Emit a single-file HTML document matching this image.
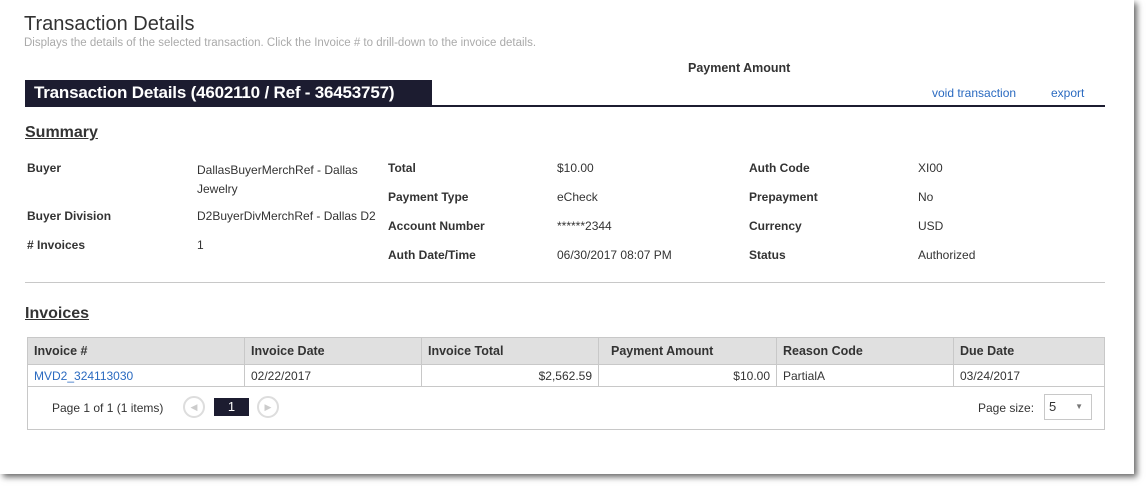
<!DOCTYPE html>
<html><head><style>
*{margin:0;padding:0;box-sizing:border-box}
body{width:1148px;height:489px;background:#fff;font-family:"Liberation Sans",sans-serif;position:relative;overflow:hidden;color:#333}
.panel{position:absolute;left:0;top:0;width:1134px;height:474px;background:#fff;box-shadow:3px 3px 6px rgba(0,0,0,.6)}
.a{position:absolute;white-space:nowrap}
.l{font-weight:bold;font-size:12px;color:#333}
.v{font-size:12px;color:#333}
.h{font-weight:bold;font-size:16px;text-decoration:underline;color:#333}
table{position:absolute;left:27px;top:337px;width:1078px;border-collapse:collapse;font-size:12px}
th{background:#e0e0e0;text-align:left;font-weight:bold;height:27px;border:1px solid #c8c8c8;padding:0 6px;color:#333;font-size:12.5px}
td{height:22px;border:1px solid #c8c8c8;padding:0 6px}
.r{text-align:right}
.circ{position:absolute;width:22px;height:22px;border:2px solid #ddd;border-radius:50%;color:#ccc;font-size:9px;text-align:center;line-height:18px}
</style></head><body>
<div class="panel"></div>
<div class="a" style="left:24px;top:13px;font-size:20px;color:#333">Transaction Details</div>
<div class="a" style="left:24px;top:37px;font-size:11.5px;color:#aaa">Displays the details of the selected transaction. Click the Invoice # to drill-down to the invoice details.</div>
<div class="a" style="left:688px;top:61px;font-size:12.5px;font-weight:bold;color:#333">Payment Amount</div>
<div class="a" style="left:25px;top:80px;width:407px;height:26px;background:#1c1c30;color:#fff;font-weight:bold;font-size:17px;padding:3px 0 0 9px;letter-spacing:-0.2px">Transaction Details (4602110 / Ref - 36453757)</div>
<div class="a" style="left:25px;top:105px;width:1080px;height:2px;background:#1c1c30"></div>
<div class="a" style="left:932px;top:86px;font-size:12px;color:#2a6ac0">void transaction</div>
<div class="a" style="left:1051px;top:86px;font-size:12px;color:#2a6ac0">export</div>
<div class="a h" style="left:25px;top:124px">Summary</div>
<div class="a l" style="left:27px;top:161px">Buyer</div>
<div class="a v" style="left:197px;top:161px;line-height:19px">DallasBuyerMerchRef - Dallas<br>Jewelry</div>
<div class="a l" style="left:27px;top:209px">Buyer Division</div>
<div class="a v" style="left:197px;top:209px">D2BuyerDivMerchRef - Dallas D2</div>
<div class="a l" style="left:27px;top:238px"># Invoices</div>
<div class="a v" style="left:197px;top:238px">1</div>
<div class="a l" style="left:388px;top:161px">Total</div><div class="a v" style="left:557px;top:161px">$10.00</div>
<div class="a l" style="left:388px;top:190px">Payment Type</div><div class="a v" style="left:557px;top:190px">eCheck</div>
<div class="a l" style="left:388px;top:219px">Account Number</div><div class="a v" style="left:557px;top:219px">******2344</div>
<div class="a l" style="left:388px;top:248px">Auth Date/Time</div><div class="a v" style="left:557px;top:248px">06/30/2017 08:07 PM</div>
<div class="a l" style="left:749px;top:161px">Auth Code</div><div class="a v" style="left:918px;top:161px">XI00</div>
<div class="a l" style="left:749px;top:190px">Prepayment</div><div class="a v" style="left:918px;top:190px">No</div>
<div class="a l" style="left:749px;top:219px">Currency</div><div class="a v" style="left:918px;top:219px">USD</div>
<div class="a l" style="left:749px;top:248px">Status</div><div class="a v" style="left:918px;top:248px">Authorized</div>
<div class="a" style="left:25px;top:282px;width:1080px;height:1px;background:#c8c8c8"></div>
<div class="a h" style="left:25px;top:305px">Invoices</div>
<table>
<tr><th style="width:217px">Invoice #</th><th style="width:177px">Invoice Date</th><th style="width:177px">Invoice Total</th><th style="width:178px;padding-left:12px">Payment Amount</th><th style="width:177px">Reason Code</th><th>Due Date</th></tr>
<tr><td style="color:#2a6ac0">MVD2_324113030</td><td>02/22/2017</td><td class="r">$2,562.59</td><td class="r">$10.00</td><td>PartialA</td><td>03/24/2017</td></tr>
<tr><td colspan="6" style="height:43px"></td></tr>
</table>
<div class="a v" style="left:52px;top:401px">Page 1 of 1 (1 items)</div>
<div class="circ" style="left:183px;top:396px">◀</div>
<div class="a" style="left:214px;top:398px;width:35px;height:18px;background:#1c1c30;color:#fff;font-size:13px;text-align:center;line-height:18px">1</div>
<div class="circ" style="left:257px;top:396px">▶</div>
<div class="a v" style="left:978px;top:401px">Page size:</div>
<div class="a" style="left:1044px;top:394px;width:48px;height:26px;border:1px solid #c8c8c8;font-size:13px;padding:4px 0 0 4px">5<span style="position:absolute;right:8px;top:7px;font-size:8px;color:#777">▼</span></div>
</body></html>
